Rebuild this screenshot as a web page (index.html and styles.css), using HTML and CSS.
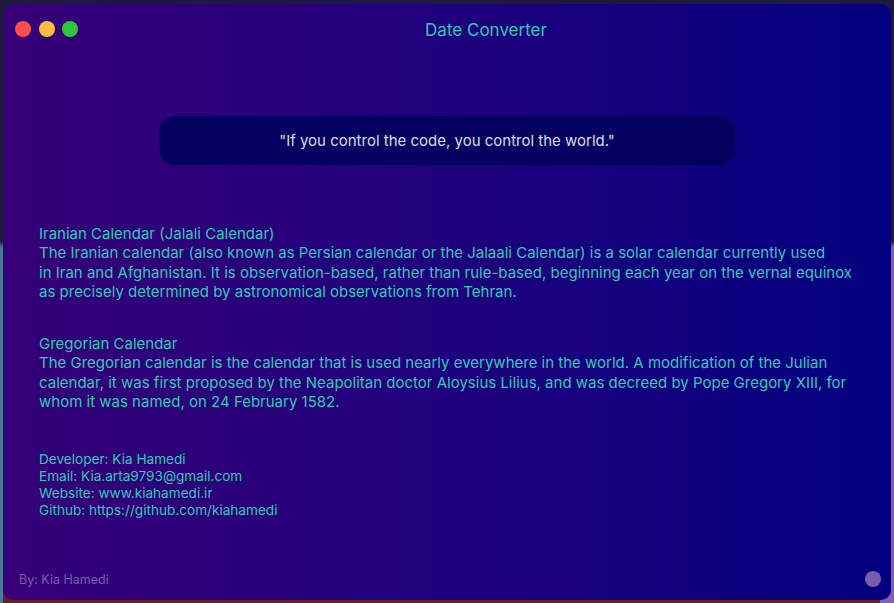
FILE: index.html
```html
<!DOCTYPE html>
<html>
<head>
<meta charset="utf-8">
<title>Date Converter</title>
<link rel="stylesheet" href="styles.css">
</head>
<body>
<div class="desktop">
  <div class="window">
    <div class="titlebar">
      <div class="lights">
        <span class="light red"></span>
        <span class="light yellow"></span>
        <span class="light green"></span>
      </div>
      <div class="title">Date Converter</div>
    </div>
    <div class="quote">"If you control the code, you control the world."</div>
    <div class="section first">
      <div>Iranian Calendar (Jalali Calendar)</div>
      <div>The Iranian calendar (also known as Persian calendar or the Jalaali Calendar) is a solar calendar currently used<br>in Iran and Afghanistan. It is observation-based, rather than rule-based, beginning each year on the vernal equinox<br>as precisely determined by astronomical observations from Tehran.</div>
    </div>
    <div class="section second">
      <div>Gregorian Calendar</div>
      <div>The Gregorian calendar is the calendar that is used nearly everywhere in the world. A modification of the Julian<br>calendar, it was first proposed by the Neapolitan doctor Aloysius Lilius, and was decreed by Pope Gregory XIII, for<br>whom it was named, on 24 February 1582.</div>
    </div>
    <div class="contact">
      <div>Developer: Kia Hamedi</div>
      <div>Email: Kia.arta9793@gmail.com</div>
      <div>Website: www.kiahamedi.ir</div>
      <div>Github: https://github.com/kiahamedi</div>
    </div>
    <div class="footer">
      <span class="by">By: Kia Hamedi</span>
      <span class="dot"></span>
    </div>
  </div>
</div>
</body>
</html>
```

FILE: styles.css
```css
html, body {
  margin: 0;
  padding: 0;
}
body {
  width: 894px;
  height: 603px;
  overflow: hidden;
  font-family: Inter, "Noto Sans", sans-serif;
}
.desktop {
  width: 894px;
  height: 603px;
  box-sizing: border-box;
  padding: 4px 3px 3px 3px;
  background:
    linear-gradient(to bottom, #1d1a3c 0%, #1d1a3c 40%, rgba(0,0,0,0) 41%),
    linear-gradient(to right, #4b7896 0 3px, #6a1a22 3px 880px, #8a5ab8 880px);
  background-color: #6a1a22;
}
.window {
  height: 596px;
  border-radius: 10px;
  background: linear-gradient(to right, #360078 0%, #1f007c 50%, #03007f 100%);
  display: flex;
  flex-direction: column;
  color: #30cab6;
  position: relative;
}
.titlebar {
  height: 52px;
  display: flex;
  align-items: center;
  position: relative;
}
.lights {
  display: flex;
  gap: 7.5px;
  padding-left: 12px;
  position: absolute;
  left: 0;
  top: 17px;
}
.light {
  width: 16px;
  height: 16px;
  border-radius: 50%;
  display: block;
}
.red { background: #fe5048; }
.yellow { background: #febc3e; }
.green { background: #30c63c; }
.title {
  flex: 1;
  text-align: center;
  font-size: 17px;
  margin-left: 78px;
  line-height: 52px;
}
.quote {
  align-self: center;
  width: 576px;
  height: 49px;
  margin-top: 60px;
  border-radius: 16px;
  background: #03005f;
  color: #dcdce6;
  font-size: 15px;
  display: flex;
  align-items: center;
  justify-content: center;
}
.section {
  padding-left: 36px;
  font-size: 15px;
  line-height: 19.3px;
}
.section.first { margin-top: 59px; }
.section.second { margin-top: 33px; }
.contact {
  padding-left: 36px;
  font-size: 13.6px;
  line-height: 17px;
  margin-top: 40px;
}
.footer {
  margin-top: auto;
  height: 30px;
  display: flex;
  align-items: center;
  justify-content: space-between;
  padding: 0 10px 6px 16px;
}
.by {
  color: #7a5cae;
  font-size: 12.5px;
}
.dot {
  width: 16px;
  height: 16px;
  border-radius: 50%;
  background: #7a5cae;
}
```
